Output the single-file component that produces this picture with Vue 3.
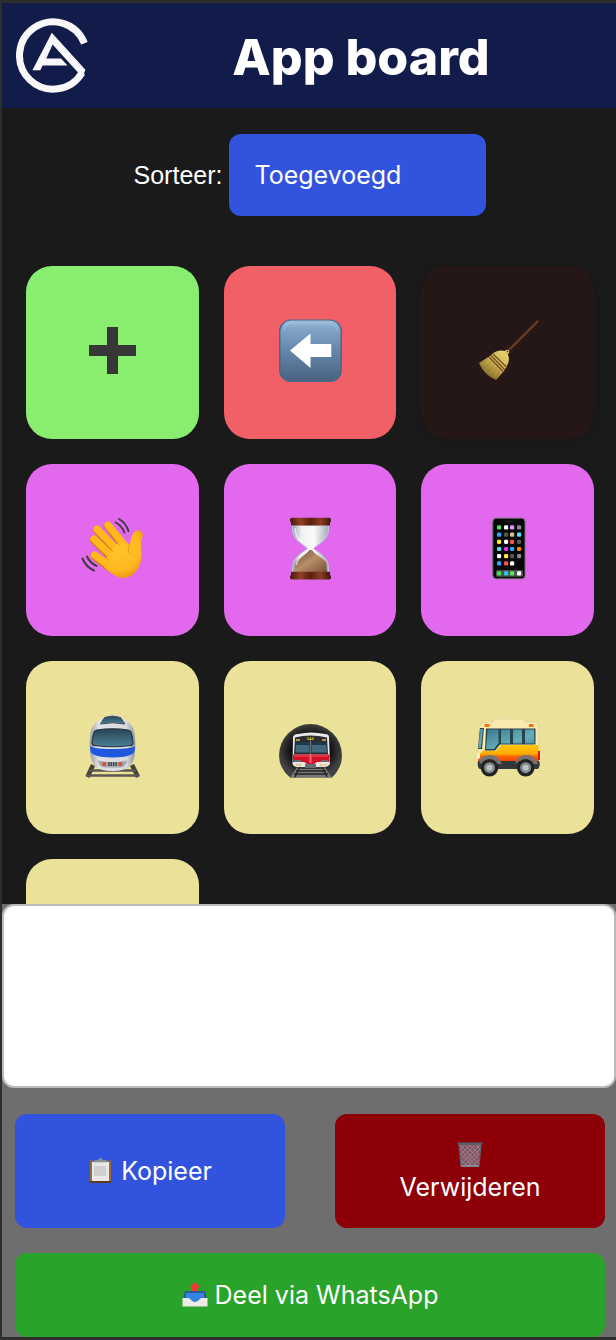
<script setup>
import { ref } from 'vue'

const sort = ref('added')
const message = ref('')

const columns = [23, 30, 36, 43]
const appRows = [
  ['#55dd55', '#ffffff', '#dd99ff', '#888888'],
  ['#28a8ff', '#555555', '#dfc08f', '#55dcff'],
  ['#ffe83c', '#ffffff', '#ff5050', '#555555'],
  ['#4fe0e8', '#ea2eea', '#28a8ff', '#ff8a00'],
  ['#ffffff', '#ffe83c', '#555555', '#888888'],
  ['#28a8ff', '#ff5050', '#ffffff'],
]
const apps = appRows.flatMap((row, r) =>
  row.map((color, c) => ({ x: columns[c] - 2, y: 8.3 + r * 7.2, color }))
)
const dock = ['#48e048', '#28c8ff', '#55e855', '#ffffff'].map((color, c) => ({
  x: columns[c] - 2,
  y: 54.3,
  color,
}))
</script>

<template>
  <div class="page">
    <header class="header">
      <svg class="logo" viewBox="16 18 72 76" aria-hidden="true">
        <path d="M84.4 43.8A33.6 33.6 0 1 0 82 73.2" fill="none" stroke="#f8f8f8" stroke-width="7" />
        <path fill="#f8f8f8" d="M51.8 33.3 85.4 70.2 83.8 74.600 79 73.500 77.3 72.300 52.600 45 46.3 59H61L67.5 66H42.6L40.3 70.7H32.4Z" />
      </svg>
      <h1>App board</h1>
    </header>

    <main class="board">
      <div class="sorter">
        <label for="sort">Sorteer:</label>
        <select id="sort" v-model="sort">
          <option value="added">Toegevoegd</option>
        </select>
      </div>

      <div class="grid">
        <button class="card green" type="button" aria-label="Plus">
          <svg viewBox="0 0 64 64"><path fill="#373737" d="M27 8h11v18h18v11H38v18H27V37H9V26h18z" /></svg>
        </button>

        <button class="card red" type="button" aria-label="Terug">
          <svg viewBox="0 0 64 64">
            <defs>
              <linearGradient id="key" x2="0" y2="1">
                <stop offset="0" stop-color="#9dbddb" />
                <stop offset=".13" stop-color="#83a6ca" />
                <stop offset=".5" stop-color="#6486ab" />
                <stop offset="1" stop-color="#4b6481" />
              </linearGradient>
            </defs>
            <rect x="1" y="0.5" width="63" height="62.5" rx="12" fill="#46688b" />
            <rect x="2.5" y="1.5" width="60" height="59.5" rx="11" fill="url(#key)" />
            <path d="M6 11Q7 4 14 4H50Q58 4 59 11" fill="none" stroke="#b5d0e8" stroke-width="1.5" opacity=".35" />
            <path fill="#fff" d="M12 31.5 32.5 14.500V25H53.3V38H32.5V49Z" />
          </svg>
        </button>

        <button class="card dark" type="button" aria-label="Wissen">
          <svg viewBox="0 0 64 64">
            <defs>
              <linearGradient id="straw" x1="1" y1="0" x2=".2" y2="1">
                <stop offset="0" stop-color="#f0dc78" />
                <stop offset=".55" stop-color="#c4a74c" />
                <stop offset="1" stop-color="#6e5920" />
              </linearGradient>
            </defs>
            <path d="M61.5 2.5 32 32" stroke="#6b4026" stroke-width="2.2" stroke-linecap="round" />
            <path fill="url(#straw)" d="M14 37Q21 30 29 32Q34 36 32.500 43Q31 48 28 52L20 61Q8 56 3 44Z" />
            <path d="M12 40 5 45M15 42 8 50M18 45 11 54M21 48 15 58M24 51 19 60" stroke="#8b702b" stroke-width=".8" opacity=".5" />
            <path d="M15 36.500 29 51M13 38 27 52.500M17 35 31 48.500" stroke="#704620" stroke-width="1.2" />
            <circle cx="31" cy="33" r="2.3" fill="#d9bd62" />
            <circle cx="31.500" cy="32.500" r=".8" fill="#674523" />
          </svg>
        </button>

        <button class="card purple" type="button" aria-label="Zwaaien">
          <svg viewBox="0 0 64 64">
            <defs>
              <radialGradient id="skin" gradientUnits="userSpaceOnUse" cx="38" cy="31" r="34">
                <stop offset="0" stop-color="#ffc52b" />
                <stop offset=".65" stop-color="#ffb81f" />
                <stop offset="1" stop-color="#e88b0c" />
              </radialGradient>
            </defs>
            <g fill="none" stroke-linecap="round" stroke-width="8">
              <path d="M14.500 39 29 50M14 23 33 42M17 13 38 36M28 9 44 30" stroke="#d9800e" />
              <path d="M14.500 38 30 49M14 22 34 41M17 12 39 35M28 8 46 30" stroke="#ffb91d" stroke-width="7.2" />
            </g>
            <path fill="url(#skin)" d="M24 44 38 26 43 25Q48 30 50 26L52 19Q54 13 59 13.500Q64 15 62.500 20Q60 25 61 30Q63 41 59 50Q52 62 42 61Q34 60 24 50Z" />
            <path d="M50 27Q46 33 50 37M26 41 28 43M30 32 33 35M37 25 40 29" fill="none" stroke="#ed9812" stroke-width="1" stroke-linecap="round" />
            <path d="M39 2Q46 6 48.500 14M35.700 5.500Q42 9 44.500 15.500M2.500 41.500Q6 50 14 53.500M7 39.500Q10 46 16.500 49" fill="none" stroke="#3d3d46" stroke-width="2" stroke-linecap="round" />
          </svg>
        </button>

        <button class="card purple" type="button" aria-label="Wachten">
          <svg viewBox="0 0 64 64">
            <defs>
              <linearGradient id="wood" x2="1">
                <stop offset="0" stop-color="#48190d" />
                <stop offset=".25" stop-color="#8f4222" />
                <stop offset=".5" stop-color="#592011" />
                <stop offset=".75" stop-color="#8b3e23" />
                <stop offset="1" stop-color="#3d160d" />
              </linearGradient>
              <linearGradient id="glass" x2="1">
                <stop offset="0" stop-color="#9aa3b3" />
                <stop offset=".25" stop-color="#f0f0f0" />
                <stop offset=".6" stop-color="#fafafa" />
                <stop offset="1" stop-color="#a8a9b7" />
              </linearGradient>
              <linearGradient id="sand" x2="1" y2="1">
                <stop offset="0" stop-color="#6c4e42" />
                <stop offset=".5" stop-color="#b88e68" />
                <stop offset="1" stop-color="#795137" />
              </linearGradient>
            </defs>
            <path fill="url(#glass)" stroke="#b5c5dd" d="M14.500 8H50.500V14C50 23 40 27 35.500 31.500C41 36 50 40 50.500 50V56H14.500V50C15 40 24 36 29.500 31.500C25 27 15 23 14.500 14Z" />
            <path fill="url(#sand)" d="M17 46C20 41 28 38 31.500 33H34C37 38 46 41 48.500 46L49 55H16Z" />
            <path d="M17 11Q17 20 24 25M18 48Q20 41 25 38" fill="none" stroke="#fff" stroke-width="1.5" opacity=".65" />
            <rect x="12" y="0.700" width="41" height="5" rx="2" fill="url(#wood)" />
            <rect x="13" y="5" width="39" height="3.500" rx="1" fill="url(#wood)" />
            <rect x="13" y="54.700" width="39" height="3.500" rx="1" fill="url(#wood)" />
            <rect x="12" y="57.700" width="41" height="4.800" rx="2" fill="url(#wood)" />
          </svg>
        </button>

        <button class="card purple" type="button" aria-label="Telefoon">
          <svg viewBox="0 0 64 64">
            <rect x="16.800" y="1.200" width="32.200" height="60.600" rx="3.500" fill="#080808" stroke="#68736a" />
            <rect x="29" y="3.500" width="8" height="2" rx="1" fill="#1d1d1d" />
            <rect x="20" y="53" width="27" height="6.800" rx="1.500" fill="#505050" />
            <rect v-for="(app, i) in apps" :key="i" :x="app.x" :y="app.y" width="4.200" height="4.200" rx="1.300" :fill="app.color" />
            <rect v-for="(app, i) in dock" :key="'dock' + i" :x="app.x" :y="app.y" width="4.200" height="4.200" rx="1.300" :fill="app.color" />
          </svg>
        </button>

        <button class="card yellow" type="button" aria-label="Trein">
          <svg viewBox="0 0 64 64">
            <defs>
              <linearGradient id="steel" x2="1">
                <stop offset="0" stop-color="#969ba3" />
                <stop offset=".2" stop-color="#dfe1e4" />
                <stop offset=".8" stop-color="#d9dadd" />
                <stop offset="1" stop-color="#8c9199" />
              </linearGradient>
              <linearGradient id="shield" x2="0" y2="1">
                <stop offset="0" stop-color="#284353" />
                <stop offset="1" stop-color="#4b8097" />
              </linearGradient>
            </defs>
            <path d="M13 50 7.500 62M52 50 58 62" stroke="#47413d" stroke-width="4.500" />
            <path d="M9 55.500H56M6 60.500H59" stroke="#5b5651" stroke-width="2.500" />
            <path fill="url(#steel)" d="M20 5Q24 0 32.500 0T45 5Q53 9 54.500 18Q56 28 55 37Q54 47 50 51Q45 56 32.500 56T15 51Q11 47 10 37Q9 28 10.500 18Q12 9 20 5Z" />
            <path fill="url(#shield)" stroke="#454d54" d="M20.500 9 24.500 2.500Q32.500-.5 40.500 2.500L45 9Q32.500 6.500 20.500 9Z" />
            <path fill="#1f57dd" d="M10 31Q13 34 32.500 34T55 31Q55 37 52.500 39Q46 42.500 32.500 42.500T12.500 39Q10 37 10 31Z" />
            <path fill="url(#shield)" stroke="#26323c" stroke-width="1.200" d="M17 15Q32.500 12.500 48 15Q50 15.500 51 17Q52.500 22 53 28Q53 30.500 50 30.500Q32.500 33 15 30.500Q12 30.500 12 28Q12.500 22 14 17Q15 15.500 17 15Z" />
            <path fill="#a1a5ab" d="M18 45.500Q32.500 49 47 45.500Q46 52 40 52.500H25Q19 52 18 45.500Z" />
            <circle cx="24.300" cy="49" r="2" fill="#e24725" />
            <circle cx="40.300" cy="49" r="2" fill="#e24725" />
            <path d="M29 47V51M31.300 47V51M33.600 47V51M36 47V51" stroke="#393d44" stroke-width="1.300" />
          </svg>
        </button>

        <button class="card yellow" type="button" aria-label="Metro">
          <svg viewBox="0 0 64 64">
            <defs>
              <radialGradient id="tunnel">
                <stop offset=".55" stop-color="#050505" />
                <stop offset="1" stop-color="#424242" />
              </radialGradient>
            </defs>
            <path fill="url(#tunnel)" d="M12 62.500Q1 53 1 40.500A31.500 31.500 0 0 1 64 40.500Q64 53 54 62.500Z" />
            <path fill="#777" d="M20 51H46L54 62.500H12Z" />
            <path d="M20 53H46M18 56H48M16 59H50M22 51 17 62M44 51 49 62" stroke="#252525" stroke-width="1.500" />
            <path fill="#e8e8e8" d="M15 22Q16 19 20 19Q33 16 47 19Q51 19 51 22L52 49Q51 51 48 52H18Q15 51 14.500 49Z" />
            <path fill="#292d31" d="M17 22.500Q32 18.500 49 22.500L50 39.500H16Z" />
            <path fill="#426880" d="M18 27H31.500V37.500H17.500ZM33.500 27H48L49 37.500H33.500Z" />
            <path fill="#203746" d="M18 27H31.500V30H18ZM33.500 27H48V30H33.500Z" />
            <path d="M32.500 23V39" stroke="#687079" />
            <path d="M18 25H22M44 25H48" stroke="#ba9846" stroke-width="2" />
            <path d="M30 22V24.500H35V22M32.500 22V24" stroke="#b3b51e" fill="none" stroke-width="1.200" />
            <path fill="#d51029" d="M15 39.500H51.500V47H39L36 49H29L26 47H15Z" />
            <path fill="#f06b78" d="M31.500 39.500H33.500V48H31.500Z" />
            <path d="M16 41H50" stroke="#ec5366" stroke-width="1" />
            <path fill="#696c70" d="M16 45H23V47H16ZM43 45H50V47H43ZM27 49H38V53H27Z" />
            <g fill="#e2c985"><circle cx="19" cy="50" r="1.500" /><circle cx="22" cy="50" r="1.500" /><circle cx="43" cy="50" r="1.500" /><circle cx="47" cy="50" r="1.500" /></g>
          </svg>
        </button>

        <button class="card yellow" type="button" aria-label="Bus">
          <svg viewBox="0 0 64 64">
            <defs>
              <linearGradient id="busGlass" x2="1" y2="1">
                <stop offset="0" stop-color="#397989" />
                <stop offset=".6" stop-color="#64aeba" />
                <stop offset="1" stop-color="#458797" />
              </linearGradient>
              <linearGradient id="busPaint" x2="0" y2="1">
                <stop offset="0" stop-color="#ffc40a" />
                <stop offset=".5" stop-color="#ffad00" />
                <stop offset=".62" stop-color="#ff6508" />
                <stop offset="1" stop-color="#e63c00" />
              </linearGradient>
            </defs>
            <path fill="#f8eab0" stroke="#d9c98c" stroke-width=".5" d="M17 7Q17 4 20 4H46Q49 4 49 7H59Q62 8 62 12L63 33H7L6 45 2 42 3 14Q4 9 8 7.500Z" />
            <path fill="url(#busPaint)" d="M7 36H20L25 30H62.500V48H2V40Z" />
            <path fill="#35383b" d="M2 46H63Q65 50 62 54H4Q1 53 2 46Z" />
            <path fill="#333f42" d="M4 13H8L6 34H2Z" />
            <path fill="url(#busGlass)" d="M4 14H7L5 33H2.500Z" />
            <path fill="#28434b" d="M10 13.500H59.500V29.500H24L19 35.500H9Z" />
            <path fill="url(#busGlass)" d="M11.500 14.500H22.500V28L18 34H10ZM25 14.500H34V28.500H25ZM37 14.500H46V28.500H37ZM49 14.500H58L58.500 28.500H49Z" />
            <path fill="#ef7414" d="M8.500 9H13.500V12H8.500ZM53 9H57.500V12H53Z" />
            <path fill="#d51c18" d="M62 36H64V45H62Z" />
            <ellipse cx="2.500" cy="41" rx="1.500" ry="3" fill="#fff3d0" />
            <path fill="#777371" d="M3 46Q6 40 14 40T26 49H21L18 45H9L5 49ZM39 49Q41 40 50 40T62 49H57L54 45H45Z" />
            <g><circle cx="13.500" cy="52.700" r="8.800" fill="#222425" /><circle cx="13.500" cy="52.700" r="5.500" fill="#858b8e" /><circle cx="13.500" cy="52.700" r="3" fill="#bdc1c1" /></g>
            <g><circle cx="49.700" cy="52.700" r="8.800" fill="#222425" /><circle cx="49.700" cy="52.700" r="5.500" fill="#858b8e" /><circle cx="49.700" cy="52.700" r="3" fill="#bdc1c1" /></g>
          </svg>
        </button>

        <button class="card yellow" type="button" aria-label="Fiets"></button>
      </div>
    </main>

    <footer class="composer">
      <textarea v-model="message" aria-label="Bericht"></textarea>
      <div class="actions">
        <button class="action copy" type="button">
          <svg viewBox="0 0 26 26" aria-hidden="true">
            <rect x="2" y="2.500" width="21" height="22.500" rx="1" fill="#9b6b35" />
            <path fill="#5d3c1c" d="M2 23H23V25H2Z" />
            <rect x="4" y="4" width="17" height="19" fill="#e8e8e8" />
            <path fill="#cfcfcf" d="M6 8H18V18H6Z" />
            <path fill="#8c9299" d="M6 4 7 2H10Q12-2 15 2H18L19 4Z" />
            <path d="M6 4.500H19" stroke="#cbd0d5" />
          </svg>
          Kopieer
        </button>
        <button class="action remove" type="button">
          <svg viewBox="0 0 26 26" aria-hidden="true">
            <path fill="#8b5260" d="M2 2H24L22 24H4Z" />
            <path d="M3 7 19 24M3 3 22 22M8 3 22 17M13 3 23 13M19 3 24 8M4 12 15 24M4 18 10 24M23 7 7 24M23 3 4 22M18 3 4 17M13 3 3 13M7 3 3 8M22 12 11 24M22 18 16 24" stroke="#929aa5" stroke-width=".7" />
            <path fill="none" stroke="#566773" stroke-width="1.200" d="M2 2H24L22 24H4Z" />
            <path d="M.500 1.500H25.500" stroke="#526270" stroke-width="2" />
            <path d="M4 24H22" stroke="#8d9ba6" stroke-width="1.500" />
          </svg>
          Verwijderen
        </button>
        <button class="action share" type="button">
          <svg viewBox="0 0 26 26" aria-hidden="true">
            <path fill="#285b9c" d="M3 9H23L25 17H1Z" />
            <path fill="#3483e5" d="M4 11H22L22 19 17 22H9L4 19Z" />
            <path fill="#eeeae5" d="M.500 16H6Q8 16 9 18Q13 22 17 18Q18 16 20 16H25.500V24.500H.500Z" />
            <path fill="#f23835" d="M13 0 18 5 16 6V9H10V6L8 5Z" />
          </svg>
          Deel via WhatsApp
        </button>
      </div>
    </footer>
  </div>
</template>

<style>
body {
  background: #2e2e2e;
}
</style>

<style scoped>
* {
  box-sizing: border-box;
}

.page {
  display: flex;
  flex-direction: column;
  height: 100vh;
  padding: 3px 0 3px 2px;
  background: #2e2e2e;
  color: #fff;
  font-family: Inter, "Liberation Sans", sans-serif;
  font-size: 25px;
  line-height: 32px;
}

.header {
  display: flex;
  flex: none;
  align-items: center;
  gap: 18px;
  padding: 14px 0 14px 14px;
  background: #121c4a;
}

.logo {
  flex: none;
  width: 72px;
  height: 77px;
}

h1 {
  flex: 1;
  margin: 0;
  padding-top: 2px;
  font-size: 50px;
  font-weight: 800;
  line-height: 64px;
  text-align: center;
}

.board {
  flex: 1;
  min-height: 0;
  padding: 26px 22px 0 24px;
  overflow-y: auto;
  scrollbar-width: none;
  background: #1a1a1a;
}

.sorter {
  display: flex;
  align-items: center;
  justify-content: center;
  gap: 7px;
  margin-bottom: 50px;
}

label {
  font-family: "Liberation Sans", Arial, sans-serif;
}

select {
  appearance: none;
  width: 257px;
  padding: 25px;
  border: 0;
  border-radius: 12px;
  background: #3253de;
  color: inherit;
  font: inherit;
}

.grid {
  display: grid;
  grid-template-columns: repeat(3, 1fr);
  gap: 25px;
}

.card {
  display: flex;
  align-items: center;
  justify-content: center;
  aspect-ratio: 1;
  padding: 0 0 2px;
  border: 0;
  border-radius: 26px;
}

.card svg {
  width: 64px;
  height: 64px;
}

.green {
  background: #89ed70;
}

.red {
  background: #f16067;
}

.dark {
  background: #251716;
  box-shadow: 0 1px 6px #171717;
}

.purple {
  background: #e268ee;
}

.yellow {
  background: #e9e298;
}

.composer {
  flex: none;
  background: #6e6e6e;
}

textarea {
  display: block;
  width: 100%;
  height: 184px;
  padding: 24px;
  border: 2px solid #bbb;
  border-radius: 12px;
  outline: 0;
  resize: none;
  background: #fff;
  font: inherit;
}

.actions {
  display: grid;
  grid-template-columns: 1fr 1fr;
  gap: 25px 50px;
  padding: 26px 11px 0 13px;
}

.action {
  padding: 25px 52px;
  border: 0;
  border-radius: 12px;
  color: inherit;
  font: inherit;
}

.action svg {
  width: 26px;
  height: 26px;
  vertical-align: -4px;
}

.copy {
  background: #3253de;
}

.remove {
  background: #8d0008;
}

.share {
  grid-column: 1 / -1;
  padding-block: 26px;
  background: #2aa32a;
}
</style>
